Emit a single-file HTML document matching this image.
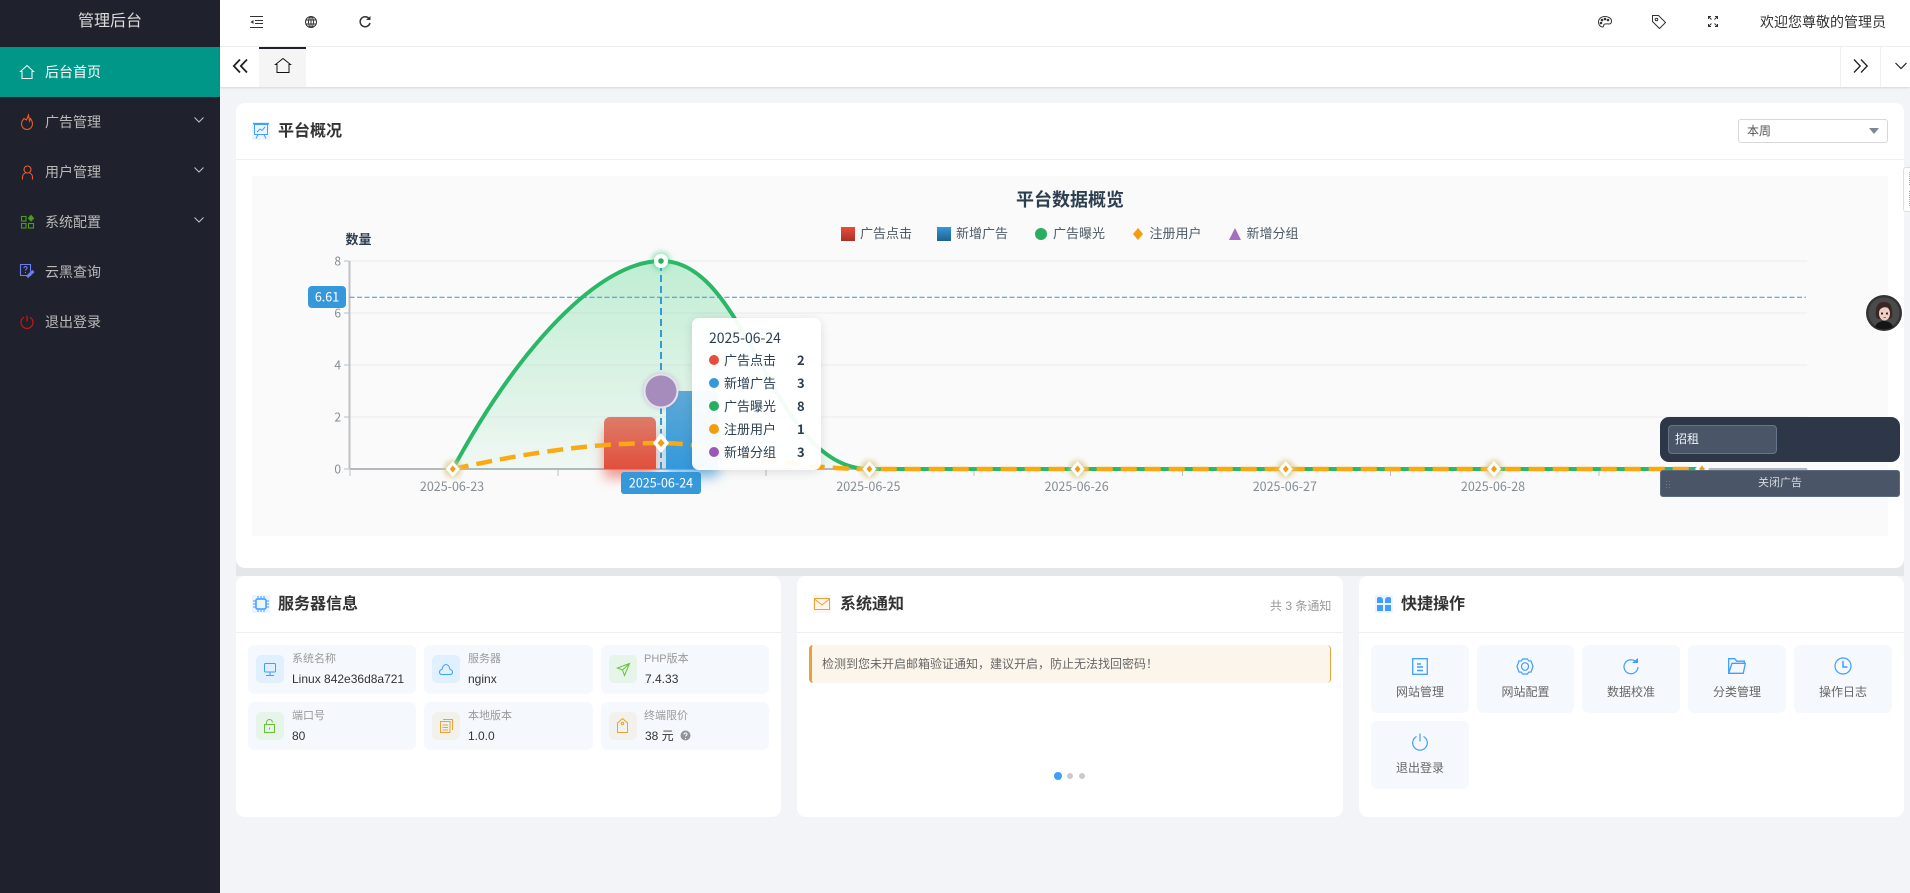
<!DOCTYPE html>
<html lang="zh"><head><meta charset="utf-8"><title>管理后台</title>
<style>
*{box-sizing:border-box}
html,body{margin:0;padding:0;width:1910px;height:893px;overflow:hidden;background:#f3f4f8;font-family:"WenQuanYi Zen Hei Sharp","WenQuanYi Zen Hei","Liberation Sans","Noto Sans CJK SC",sans-serif;color:#333}
.a{position:absolute}
.t{position:absolute;white-space:nowrap;line-height:1}
svg{position:absolute;overflow:visible}
.card{position:absolute;background:#fff;border-radius:9px}
.hr{position:absolute;height:1px;background:#edeef3}
.cell{position:absolute;background:#f5f9fe;border-radius:6px}
.ib{position:absolute;width:28px;height:28px;border-radius:5px}
.lb{font-size:11px;color:#999}
.vl{font-size:12px;color:#333}
.q{font-size:12px;color:#666;text-align:center}
.title{font-size:16px;font-weight:bold;color:#333}
.menu{font-size:14px;color:#b9b9b9}
.ct{font-family:"WenQuanYi Zen Hei","Noto Sans CJK SC",sans-serif}
</style></head><body>

<!-- sidebar -->
<div class="a" style="left:0;top:0;width:220px;height:893px;background:#1f222c"></div>
<div class="t" style="left:78px;top:14px;font-size:16px;color:#dcdcdc">管理后台</div>
<div class="a" style="left:0;top:47px;width:220px;height:50px;background:#009688"></div>
<svg style="left:19px;top:64px" width="16" height="16" viewBox="0 0 16 16" fill="none" stroke="#fff" stroke-width="1"><path d="M1.500 7.500 8 1.500l6.500 6H13v7H3v-7z"/></svg>
<div class="t menu" style="left:45px;top:65px;color:#fff">后台首页</div>
<svg style="left:20px;top:114px" width="14" height="16" viewBox="0 0 14 16" fill="none" stroke="#f0592b" stroke-width="1.100"><path d="M4 4.500C3 6 1.500 7 1.500 10a5.500 5.500 0 0 0 11 0c0-2.500-1-4-2-5.500L9.500 7 8.500 1 6.500 6z"/></svg>
<div class="t menu" style="left:45px;top:115px">广告管理</div>
<svg style="left:21px;top:165px" width="14" height="15" viewBox="0 0 14 15" fill="none" stroke="#f0592b" stroke-width="1.100"><circle cx="6.500" cy="4.500" r="3.500"/><path d="M1.500 14.500V12c0-2 1.500-3.500 3-4M11.500 14.500V12c0-2-1.500-3.500-3-4"/></svg>
<div class="t menu" style="left:45px;top:165px">用户管理</div>
<svg style="left:21px;top:215px" width="13" height="14" viewBox="0 0 13 14" fill="none" stroke="#4f9a1e" stroke-width="1.100"><rect x=".5" y="1.500" width="4.500" height="4.500"/><rect x=".5" y="8.500" width="4.500" height="4.500"/><rect x="7.500" y="8.500" width="5" height="4.500"/><path d="M10 .5l2.500 2.800L10 6 7.500 3.300z" fill="#4f9a1e"/></svg>
<div class="t menu" style="left:45px;top:215px">系统配置</div>
<svg style="left:20px;top:264px" width="15" height="16" viewBox="0 0 15 16" fill="none" stroke="#6c7df0" stroke-width="1.100"><path d="M10.500 10.500v1H.5v-11h10v7"/><path d="M4 4c0-2 3-2 3 0 0 1-1.500 1.300-1.500 2.500M5.500 8v1"/><path d="M7 13l6.500-6" stroke-width="3"/></svg>
<div class="t menu" style="left:45px;top:265px">云黑查询</div>
<svg style="left:20px;top:315px" width="14" height="14" viewBox="0 0 14 14" fill="none" stroke="#e21010" stroke-width="1.100"><path d="M4 2.200a6 6 0 1 0 6 0M7 .5v6"/></svg>
<div class="t menu" style="left:45px;top:315px">退出登录</div>
<svg style="left:194px;top:117px" width="10" height="6" viewBox="0 0 10 6" fill="none" stroke="#c0c0c0" stroke-width="1.100"><path d="M.5.500 5 5 9.500.500"/></svg>
<svg style="left:194px;top:167px" width="10" height="6" viewBox="0 0 10 6" fill="none" stroke="#c0c0c0" stroke-width="1.100"><path d="M.5.500 5 5 9.500.500"/></svg>
<svg style="left:194px;top:217px" width="10" height="6" viewBox="0 0 10 6" fill="none" stroke="#c0c0c0" stroke-width="1.100"><path d="M.5.500 5 5 9.500.500"/></svg>

<!-- top header -->
<div class="a" style="left:220px;top:0;width:1690px;height:47px;background:#fff;border-bottom:1px solid #f0f0f0"></div>
<svg style="left:250px;top:16px" width="13" height="12" viewBox="0 0 13 12" fill="none" stroke="#333" stroke-width="1"><path d="M0 .5h13M5 4.500h8M5 7.500h8M0 11.500h13"/><path d="M3.500 4v4L.5 6z" fill="#333" stroke="none"/></svg>
<svg style="left:305px;top:16px" width="12" height="12" viewBox="0 0 12 12" fill="none" stroke="#333" stroke-width="1"><circle cx="6" cy="6" r="5.500"/><ellipse cx="6" cy="6" rx="2.500" ry="5.500"/><path d="M.5 4h11M.5 8h11M6 .5v11"/></svg>
<svg style="left:359px;top:16px" width="12" height="12" viewBox="0 0 12 12" fill="none" stroke="#333" stroke-width="1.500"><path d="M10 2.500A5 5 0 1 0 11 7"/><path d="M7 4h4.500V0z" fill="#333" stroke="none"/></svg>
<svg style="left:1598px;top:16px" width="14" height="12" viewBox="0 0 14 12" fill="none" stroke="#333" stroke-width="1"><path d="M7 .5C3 .5.500 3 .500 6c0 3 2 5 4 5 1.500 0 1-1.500 1.500-2.500S9 8 11 8s2.500-1.500 2.500-3C13.500 2.500 10.500.500 7 .500z"/><circle cx="4" cy="4" r=".8" fill="#333"/><circle cx="7" cy="3" r=".8" fill="#333"/><circle cx="10" cy="4" r=".8" fill="#333"/><circle cx="3" cy="7" r=".8" fill="#333"/></svg>
<svg style="left:1652px;top:15px" width="14" height="14" viewBox="0 0 14 14" fill="none" stroke="#333" stroke-width="1"><path d="M.5.500h6l7 7-6 6-7-7z"/><circle cx="4.500" cy="4.500" r="1.300"/></svg>
<svg style="left:1708px;top:16px" width="10" height="11" viewBox="0 0 10 11" fill="none" stroke="#333" stroke-width="1"><path d="M3 .5H.5V3M7 .5h2.500V3M3 10.500H.5V8M7 10.500h2.500V8M.5.500l3 3M9.500.500l-3 3M.5 10.500l3-3M9.500 10.500l-3-3"/></svg>
<div class="t" style="left:1760px;top:15px;font-size:14px;color:#333">欢迎您尊敬的管理员</div>

<!-- tabs -->
<div class="a" style="left:220px;top:47px;width:1690px;height:40px;background:#fff;box-shadow:0 1px 2px rgba(0,0,0,.12)"></div>
<svg style="left:233px;top:59px" width="15" height="14" viewBox="0 0 15 14" fill="none" stroke="#222" stroke-width="1.800"><path d="M7 .5.800 7 7 13.500M14 .5 7.800 7 14 13.500"/></svg>
<div class="a" style="left:259px;top:47px;width:47px;height:40px;background:#f5f5f5;border-top:2px solid #1f222c"></div>
<svg style="left:275px;top:58px" width="16" height="15" viewBox="0 0 16 15" fill="none" stroke="#111" stroke-width="1"><path d="M.5 6.500 8 .5l7.500 6H14v8H2v-8z"/></svg>
<div class="a" style="left:1840px;top:47px;width:1px;height:40px;background:#f0f0f0"></div>
<div class="a" style="left:1880px;top:47px;width:1px;height:40px;background:#f0f0f0"></div>
<svg style="left:1853px;top:59px" width="15" height="14" viewBox="0 0 15 14" fill="none" stroke="#222" stroke-width="1.300"><path d="M1 .5 7.200 7 1 13.500M8 .5 14.200 7 8 13.500"/></svg>
<svg style="left:1895px;top:62px" width="12" height="8" viewBox="0 0 12 8" fill="none" stroke="#222" stroke-width="1.200"><path d="M.5 1 6 6.500 11.500 1"/></svg>

<!-- main card -->
<div class="a" style="left:236px;top:560px;width:1668px;height:16px;background:#e5e6ea"></div>
<div class="card" style="left:236px;top:103px;width:1668px;height:465px"></div>
<div class="hr" style="left:236px;top:159px;width:1668px"></div>
<div class="a" style="left:252px;top:122px;width:18px;height:18px;background:#ecf5ff"></div>
<svg style="left:253px;top:123px" width="16" height="16" viewBox="0 0 16 16" fill="none" stroke="#409eff" stroke-width="1"><path d="M0 .7h16" stroke-width="1.500"/><rect x="1.500" y="1.500" width="13" height="10"/><path d="M4 9l3-3 2 1.500 3-3.500M5 11.500 3 15.500M11 11.500l2 4"/></svg>
<div class="t title" style="left:278px;top:124px">平台概况</div>
<div class="a" style="left:1738px;top:119px;width:150px;height:24px;border:1px solid #d6d8dc;border-radius:3px;background:#fff"></div>
<div class="t" style="left:1747px;top:125px;font-size:12px;color:#555">本周</div>
<div class="a" style="left:1869px;top:128px;width:0;height:0;border-left:5px solid transparent;border-right:5px solid transparent;border-top:6px solid #808694"></div>

<!-- chart area -->
<div class="a" style="left:252px;top:176px;width:1636px;height:360px;background:#fafafa"></div>
<svg style="left:0;top:0;filter:blur(.35px)" width="1910" height="893" viewBox="0 0 1910 893">
<defs>
<linearGradient id="ga" x1="0" y1="261" x2="0" y2="469" gradientUnits="userSpaceOnUse"><stop offset="0" stop-color="#2ecc71" stop-opacity=".28"/><stop offset="1" stop-color="#2ecc71" stop-opacity=".05"/></linearGradient>
<linearGradient id="rb" x1="0" y1="0" x2="0" y2="1"><stop offset="0" stop-color="#df7b69"/><stop offset="1" stop-color="#e0503c"/></linearGradient>
<linearGradient id="bb" x1="0" y1="0" x2="0" y2="1"><stop offset="0" stop-color="#5eaad6"/><stop offset="1" stop-color="#3498db"/></linearGradient>
<linearGradient id="lr" x1="0" y1="0" x2="0" y2="1"><stop offset="0" stop-color="#e74c3c"/><stop offset="1" stop-color="#a93226"/></linearGradient>
<linearGradient id="lb" x1="0" y1="0" x2="0" y2="1"><stop offset="0" stop-color="#3498db"/><stop offset="1" stop-color="#1f618d"/></linearGradient>
<filter id="gl" x="-50%" y="-50%" width="200%" height="200%"><feGaussianBlur stdDeviation="6"/></filter>
<filter id="gs" x="-100%" y="-100%" width="300%" height="300%"><feGaussianBlur stdDeviation="2.500"/></filter>
</defs>
<g stroke="#eeeff1" stroke-width="1.200"><path d="M350 261H1807M350 313H1807M350 365H1807M350 417H1807"/></g>
<g stroke="#b9bdc2" stroke-width="1"><path d="M344 261h5M344 313h5M344 365h5M344 417h5M344 469h5M350 469v7M558 469v7M766 469v7M974 469v7M1182.500 469v7M1390.500 469v7M1599 469v7M1807 469v7"/></g>
<path d="M349.500 261V469" stroke="#bdc1c6" stroke-width="2"/>
<path d="M349.500 469H1807" stroke="#b5b9be" stroke-width="2"/>
<!-- area -->
<path d="M452.800 469C520 345 600 261 661.200 261C750 261 770 469 869.400 469z" fill="url(#ga)"/>
<!-- bars -->
<rect x="604" y="430" width="52" height="48" fill="#e74c3c" opacity=".55" filter="url(#gl)"/>
<rect x="666" y="430" width="52" height="48" fill="#3498db" opacity=".55" filter="url(#gl)"/>
<path d="M604 469V423a6 6 0 0 1 6-6h40a6 6 0 0 1 6 6V469z" fill="url(#rb)"/>
<path d="M666 469V397a6 6 0 0 1 6-6h40a6 6 0 0 1 6 6V469z" fill="url(#bb)"/>
<!-- lines -->
<path d="M452.800 469C520 345 600 261 661.200 261C750 261 770 469 869.400 469H1702" fill="none" stroke="#2ab866" stroke-width="4"/>
<path d="M452.800 469C540 450 600 443 661.200 443C722 443 770 469 869.400 469H1702" fill="none" stroke="#fba913" stroke-width="4.500" stroke-dasharray="16 8"/>
<path d="M349.500 297.300H1806" stroke="#3498db" stroke-width="1" stroke-dasharray="5 2.500"/>
<path d="M661 264V469" stroke="#3498db" stroke-width="2" stroke-dasharray="7 4"/>
<!-- markers -->
<g id="mk">
<circle cx="452.800" cy="469" r="9" fill="#d8c98a" opacity=".7" filter="url(#gs)"/>
<circle cx="869.400" cy="469" r="9" fill="#d8c98a" opacity=".7" filter="url(#gs)"/>
<circle cx="1077.600" cy="469" r="9" fill="#d8c98a" opacity=".7" filter="url(#gs)"/>
<circle cx="1285.800" cy="469" r="9" fill="#d8c98a" opacity=".7" filter="url(#gs)"/>
<circle cx="1494" cy="469" r="9" fill="#d8c98a" opacity=".7" filter="url(#gs)"/>
<path d="M452.800 461l7 8-7 8-7-8zM869.400 461l7 8-7 8-7-8zM1077.600 461l7 8-7 8-7-8zM1285.800 461l7 8-7 8-7-8zM1494 461l7 8-7 8-7-8zM1702 461l7 8-7 8-7-8z" fill="#fff"/>
<path d="M452.800 465.500l3 3.500-3 3.500-3-3.500zM869.400 465.500l3 3.500-3 3.500-3-3.500zM1077.600 465.500l3 3.500-3 3.500-3-3.500zM1285.800 465.500l3 3.500-3 3.500-3-3.500zM1494 465.500l3 3.500-3 3.500-3-3.500zM1702 465.500l3 3.500-3 3.500-3-3.500z" fill="#f39c12"/>
</g>
<circle cx="661" cy="391" r="18" fill="#9b59b6" opacity=".3" filter="url(#gs)"/>
<circle cx="661" cy="391" r="17.500" fill="#e3e3ea"/>
<circle cx="661" cy="391" r="15.500" fill="#a68cbc"/>
<path d="M661 433l8 10-8 10-8-10z" fill="#fff"/><path d="M661 439l3.500 4-3.500 4-3.500-4z" fill="#f39c12"/>
<circle cx="661" cy="261" r="10" fill="#2ecc71" opacity=".4" filter="url(#gs)"/>
<circle cx="661" cy="261" r="7" fill="#fff"/><circle cx="661" cy="261" r="2.800" fill="#27ae60"/>
<!-- pointer labels -->
<rect x="308" y="286" width="38" height="22" rx="4" fill="#3498db"/>
<text x="327" y="301.500" text-anchor="middle" font-size="12.500" fill="#fff" class="ct">6.61</text>
<rect x="621" y="472" width="80" height="22" rx="3" fill="#3498db"/>
<text x="661" y="487.500" text-anchor="middle" font-size="12.500" fill="#fff" class="ct">2025-06-24</text>
<!-- axis labels -->
<g font-size="12" fill="#858d92" class="ct" text-anchor="end">
<text x="341" y="265.500">8</text><text x="341" y="317.500">6</text><text x="341" y="369.500">4</text><text x="341" y="421.500">2</text><text x="341" y="473.500">0</text></g>
<g font-size="12.500" fill="#858d92" class="ct" text-anchor="middle">
<text x="452" y="491">2025-06-23</text><text x="868.400" y="491">2025-06-25</text><text x="1076.600" y="491">2025-06-26</text><text x="1284.800" y="491">2025-06-27</text><text x="1493" y="491">2025-06-28</text></g>
<text x="345.500" y="244" font-size="13" font-weight="bold" fill="#2c3e50" class="ct">数量</text>
<text x="1070" y="206" font-size="18" font-weight="bold" fill="#2c3e50" text-anchor="middle" class="ct">平台数据概览</text>
<!-- legend -->
<rect x="841" y="227" width="14" height="14" fill="url(#lr)"/>
<rect x="937" y="227" width="14" height="14" fill="url(#lb)"/>
<circle cx="1041" cy="234" r="6" fill="#27ae60"/>
<path d="M1138 228l5 6-5 6-5-6z" fill="#f39c12"/>
<path d="M1235 228l6 12h-12z" fill="#a56fc0"/>
<g font-size="13" fill="#4d5a66" class="ct">
<text x="860" y="238">广告点击</text><text x="956" y="238">新增广告</text><text x="1053" y="238">广告曝光</text><text x="1149.500" y="238">注册用户</text><text x="1246.500" y="238">新增分组</text></g>
</svg>

<!-- tooltip -->
<div class="a" style="left:692px;top:318px;width:129px;height:152px;background:rgba(255,255,255,.95);border-radius:7px;box-shadow:0 2px 10px rgba(0,0,0,.12)"></div>
<div class="t ct" style="left:709px;top:331px;font-size:14px;color:#2c3e50">2025-06-24</div>
<div class="a" style="left:709px;top:355px;width:10px;height:10px;border-radius:5px;background:#e74c3c"></div>
<div class="a" style="left:709px;top:378px;width:10px;height:10px;border-radius:5px;background:#3498db"></div>
<div class="a" style="left:709px;top:401px;width:10px;height:10px;border-radius:5px;background:#27ae60"></div>
<div class="a" style="left:709px;top:424px;width:10px;height:10px;border-radius:5px;background:#f39c12"></div>
<div class="a" style="left:709px;top:447px;width:10px;height:10px;border-radius:5px;background:#9b59b6"></div>
<div class="t ct" style="left:724px;top:353px;font-size:13px;color:#2c3e50">广告点击</div>
<div class="t ct" style="left:724px;top:376px;font-size:13px;color:#2c3e50">新增广告</div>
<div class="t ct" style="left:724px;top:399px;font-size:13px;color:#2c3e50">广告曝光</div>
<div class="t ct" style="left:724px;top:422px;font-size:13px;color:#2c3e50">注册用户</div>
<div class="t ct" style="left:724px;top:445px;font-size:13px;color:#2c3e50">新增分组</div>
<div class="t ct" style="left:797px;top:353px;font-size:13px;font-weight:bold;color:#2c3e50">2</div>
<div class="t ct" style="left:797px;top:376px;font-size:13px;font-weight:bold;color:#2c3e50">3</div>
<div class="t ct" style="left:797px;top:399px;font-size:13px;font-weight:bold;color:#2c3e50">8</div>
<div class="t ct" style="left:797px;top:422px;font-size:13px;font-weight:bold;color:#2c3e50">1</div>
<div class="t ct" style="left:797px;top:445px;font-size:13px;font-weight:bold;color:#2c3e50">3</div>

<!-- ad widget -->
<div class="a" style="left:1660px;top:417px;width:240px;height:45px;background:#2d3748;border-radius:9px"></div>
<div class="a" style="left:1668px;top:425px;width:109px;height:29px;background:#4a5568;border:1px solid #66758c;border-radius:4px"></div>
<div class="t" style="left:1675px;top:433px;font-size:12px;color:#edf2f7">招租</div>
<div class="a" style="left:1660px;top:470px;width:240px;height:27px;background:#4a5568;border:1px solid #5b6a82;border-radius:3px"></div>
<div class="t" style="left:1758px;top:478px;font-size:11px;color:#d5dae2">关闭广告</div>
<svg style="left:1666px;top:481px" width="5" height="7" viewBox="0 0 5 7" fill="#6f7b8e"><rect width="1" height="1"/><rect x="3" width="1" height="1"/><rect y="3" width="1" height="1"/><rect x="3" y="3" width="1" height="1"/><rect y="6" width="1" height="1"/><rect x="3" y="6" width="1" height="1"/></svg>

<!-- side tab + avatar -->
<div class="a" style="left:1903px;top:167px;width:10px;height:45px;background:#fff;border:1px solid #dcdfe6;border-radius:3px 0 0 3px"></div>
<div class="a" style="left:1909px;top:172px;width:1px;height:14px;background:repeating-linear-gradient(#aaa 0 1px,transparent 1px 2px)"></div>
<div class="a" style="left:1909px;top:191px;width:1px;height:16px;background:repeating-linear-gradient(#aaa 0 1px,transparent 1px 2px)"></div>
<svg style="left:1866px;top:295px" width="36" height="36" viewBox="0 0 36 36">
<circle cx="18" cy="18" r="18" fill="#333" /><circle cx="18" cy="18" r="15.500" fill="#4a4a4a"/>
<path d="M10 22C9 11 12 7 18 7s9 4 8 15l-2 2H12z" fill="#3a2622"/>
<path d="M9 32c1-4 5-6 9-6s8 2 9 6c-5 3-13 3-18 0z" fill="#151515"/>
<ellipse cx="18.500" cy="18.500" rx="5.500" ry="7" fill="#f1cfc4"/>
<path d="M13 16c2-4 7-5 11-2 0-4-9-6-11 2z" fill="#3a2622"/>
<circle cx="16" cy="18.500" r="1.100" fill="#222"/><circle cx="21" cy="18.500" r="1.100" fill="#222"/>
<path d="M17.500 22.500h2.500" stroke="#c9504f" stroke-width="1"/></svg>

<!-- bottom cards -->
<div class="card" style="left:236px;top:576px;width:545px;height:241px"></div>
<div class="card" style="left:797px;top:576px;width:546px;height:241px"></div>
<div class="card" style="left:1359px;top:576px;width:545px;height:241px"></div>
<div class="hr" style="left:236px;top:632px;width:545px"></div>
<div class="hr" style="left:797px;top:632px;width:546px"></div>
<div class="hr" style="left:1359px;top:632px;width:545px"></div>

<!-- server card -->
<div class="a" style="left:252px;top:595px;width:18px;height:18px;background:#ecf5ff"></div>
<svg style="left:252px;top:595px" width="18" height="18" viewBox="0 0 18 18" fill="none" stroke="#409eff"><rect x="4" y="4" width="10" height="10" rx="1.500" stroke-width="1.500"/><path d="M1 6h3M1 9h3M1 12h3M14 6h3M14 9h3M14 12h3M6 1v3M9 1v3M12 1v3M6 14v3M9 14v3M12 14v3" stroke-width="1"/></svg>
<div class="t title" style="left:278px;top:597px">服务器信息</div>

<div class="cell" style="left:248px;top:645px;width:168px;height:49px"></div>
<div class="cell" style="left:424px;top:645px;width:169px;height:49px"></div>
<div class="cell" style="left:601px;top:645px;width:168px;height:49px"></div>
<div class="cell" style="left:248px;top:702px;width:168px;height:48px"></div>
<div class="cell" style="left:424px;top:702px;width:169px;height:48px"></div>
<div class="cell" style="left:601px;top:702px;width:168px;height:48px"></div>
<div class="ib" style="left:256px;top:655px;background:#e1f0ff"></div>
<div class="ib" style="left:432px;top:655px;background:#e1f0ff"></div>
<div class="ib" style="left:609px;top:655px;background:#e6f4ea"></div>
<div class="ib" style="left:256px;top:712px;background:#e6f4ea"></div>
<div class="ib" style="left:432px;top:712px;background:#f3f1ec"></div>
<div class="ib" style="left:609px;top:712px;background:#f3f1ec"></div>
<svg style="left:263px;top:663px" width="14" height="13" viewBox="0 0 14 13" fill="none" stroke="#409eff"><rect x="1.500" y=".5" width="11" height="8.500" rx="1"/><path d="M7 9v3M3 12.500h8"/></svg>
<svg style="left:439px;top:664px" width="14" height="11" viewBox="0 0 14 11" fill="none" stroke="#409eff"><path d="M3 10.500C1 10.500.5 9 .5 8S1.500 5.500 3 5.500C3.500 2 5.500.5 7 .5S10.500 2 11 5.500c1.500 0 2.500 1.500 2.500 2.500s-.5 2.500-2.500 2.500z"/></svg>
<svg style="left:617px;top:663px" width="13" height="13" viewBox="0 0 13 13" fill="none" stroke="#67c23a"><path d="M12.500.5.500 5l5 2 2 5.500zM5.500 7 12.500.5"/></svg>
<svg style="left:264px;top:719px" width="11" height="14" viewBox="0 0 11 14" fill="none" stroke="#67c23a"><rect x=".5" y="5.500" width="10" height="8"/><path d="M2.500 5.500V3.500a3 3 0 0 1 6 0M5.500 8.500v2"/></svg>
<svg style="left:440px;top:719px" width="13" height="14" viewBox="0 0 13 14" fill="none" stroke="#e6a23c"><rect x=".5" y="2.500" width="9.500" height="11"/><path d="M3 .5h9.500V11M2.500 6h5.500M2.500 8.500h5.500M2.500 11h5.500"/></svg>
<svg style="left:617px;top:718px" width="11" height="15" viewBox="0 0 11 15" fill="none" stroke="#e6a23c"><path d="M5.500.5 10.500 5v9.500H.5V5z"/><circle cx="5.500" cy="5.500" r="1.200"/></svg>
<div class="t lb" style="left:292px;top:654px">系统名称</div>
<div class="t lb" style="left:468px;top:654px">服务器</div>
<div class="t lb" style="left:644px;top:654px">PHP版本</div>
<div class="t lb" style="left:292px;top:711px">端口号</div>
<div class="t lb" style="left:468px;top:711px">本地版本</div>
<div class="t lb" style="left:644px;top:711px">终端限价</div>
<div class="t vl" style="left:292px;top:673px">Linux 842e36d8a721</div>
<div class="t vl" style="left:468px;top:673px">nginx</div>
<div class="t vl" style="left:645px;top:673px">7.4.33</div>
<div class="t vl" style="left:292px;top:730px">80</div>
<div class="t vl" style="left:468px;top:730px">1.0.0</div>
<div class="t vl" style="left:645px;top:730px">38 元</div>
<svg style="left:680px;top:730px" width="11" height="11" viewBox="0 0 11 11"><circle cx="5.500" cy="5.500" r="5" fill="#909399"/><path d="M4 4.500c0-2 3-2 3 0 0 1-1.500 1-1.500 2M5.500 8v1" stroke="#fff" fill="none"/></svg>

<!-- notice card -->
<div class="a" style="left:813px;top:595px;width:18px;height:18px;background:#fdf6ec"></div>
<svg style="left:814px;top:597px" width="16" height="14" viewBox="0 0 16 14" fill="none" stroke="#e6a23c" stroke-width="1"><rect x=".5" y="1.500" width="15" height="11"/><path d="M.5 2 8 8l7.500-6"/></svg>
<div class="t title" style="left:840px;top:597px">系统通知</div>
<div class="t" style="left:1270px;top:600px;font-size:12px;color:#999">共 3 条通知</div>
<div class="a" style="left:809px;top:645px;width:522px;height:38px;background:#fcf5eb;border-left:3px solid #e6a23c;border-right:1px solid #e6a23c;border-radius:4px"></div>
<div class="t" style="left:822px;top:658px;font-size:12px;color:#666">检测到您未开启邮箱验证通知，建议开启，防止无法找回密码！</div>
<div class="a" style="left:1054px;top:772px;width:8px;height:8px;border-radius:4px;background:#409eff"></div>
<div class="a" style="left:1067px;top:773px;width:6px;height:6px;border-radius:3px;background:#c8c9cc"></div>
<div class="a" style="left:1079px;top:773px;width:6px;height:6px;border-radius:3px;background:#c8c9cc"></div>

<!-- quick card -->
<div class="a" style="left:1375px;top:595px;width:18px;height:18px;background:#ecf5ff"></div>
<svg style="left:1377px;top:597px" width="14" height="14" viewBox="0 0 14 14" fill="#409eff"><path d="M0 2a2 2 0 0 1 2-2h1a3 3 0 0 1 3 3v3H0zM8 3a3 3 0 0 1 3-3h1a2 2 0 0 1 2 2v4H8zM0 8h6v6H0zM8 8h6v6H8z"/></svg>
<div class="t title" style="left:1401px;top:597px">快捷操作</div>
<div class="cell" style="left:1371px;top:645px;width:98px;height:68px"></div>
<div class="cell" style="left:1477px;top:645px;width:97px;height:68px"></div>
<div class="cell" style="left:1582px;top:645px;width:98px;height:68px"></div>
<div class="cell" style="left:1688px;top:645px;width:98px;height:68px"></div>
<div class="cell" style="left:1794px;top:645px;width:98px;height:68px"></div>
<div class="cell" style="left:1371px;top:721px;width:98px;height:68px"></div>
<svg style="left:1412px;top:658px" width="16" height="17" viewBox="0 0 16 17" fill="none" stroke="#409eff" stroke-width="1.300"><rect x=".7" y=".7" width="14.600" height="15.600"/><path d="M5 6h4M5 9h6M5 12.500h6" stroke-width="1.500"/></svg>
<svg style="left:1516px;top:658px" width="18" height="17" viewBox="0 0 18 17" fill="none" stroke="#409eff" stroke-width="1.200"><path d="M6.500 1h5l1 1.800 2.500.2 2 5.500-2 5.500-2.500.2-1 1.800h-5l-1-1.800L3 14 1 8.500 3 3l2.500-.2z"/><ellipse cx="9" cy="8.500" rx="3.500" ry="3.800"/></svg>
<svg style="left:1623px;top:658px" width="16" height="16" viewBox="0 0 16 16" fill="none" stroke="#409eff" stroke-width="1.200"><path d="M12 3A7 7 0 1 0 15 9"/><path d="M9 5h6V0z" fill="#409eff" stroke="none"/></svg>
<svg style="left:1728px;top:658px" width="18" height="16" viewBox="0 0 18 16" fill="none" stroke="#409eff" stroke-width="1.300"><path d="M.7 15.300V.7h6l2 2.500h7.600v2"/><path d="M.7 15.300h14.600l2-10H4z"/></svg>
<svg style="left:1834px;top:657px" width="18" height="18" viewBox="0 0 18 18" fill="none" stroke="#409eff" stroke-width="1.200"><circle cx="9" cy="9" r="8"/><path d="M9 4v6h4.500" stroke-width="1.500"/></svg>
<svg style="left:1412px;top:733px" width="16" height="18" viewBox="0 0 16 18" fill="none" stroke="#409eff" stroke-width="1.200"><path d="M4.500 3.500a7.300 7.300 0 1 0 7 0M8 .5v8"/></svg>
<div class="t q" style="left:1371px;top:686px;width:98px">网站管理</div>
<div class="t q" style="left:1477px;top:686px;width:97px">网站配置</div>
<div class="t q" style="left:1582px;top:686px;width:98px">数据校准</div>
<div class="t q" style="left:1688px;top:686px;width:98px">分类管理</div>
<div class="t q" style="left:1794px;top:686px;width:98px">操作日志</div>
<div class="t q" style="left:1371px;top:762px;width:98px">退出登录</div>

</body></html>
